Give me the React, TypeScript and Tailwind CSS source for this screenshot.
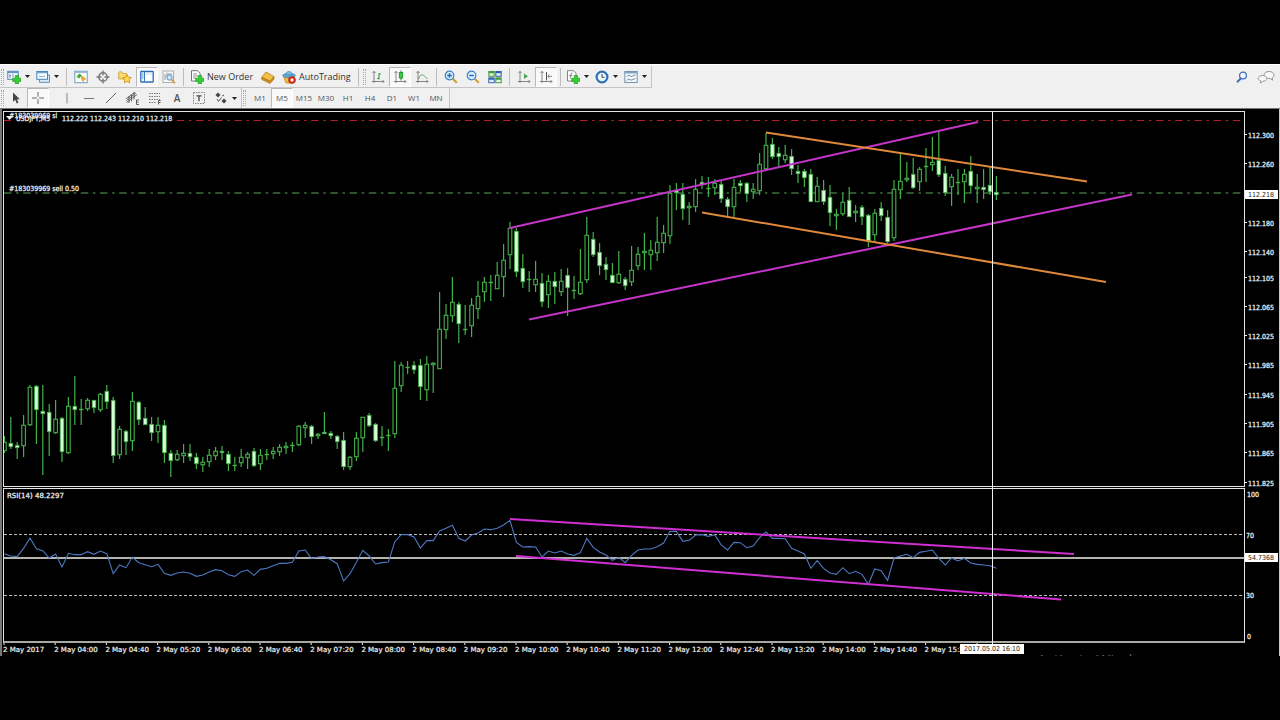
import type { ReactNode } from "react";

// [high, body top, body bottom, low, filled]
type Candle = [number, number, number, number, 0 | 1];

const candles: Candle[] = [
    [436, 442, 451, 453, 0], [417, 443, 447, 449, 1], [442, 445, 448, 459, 1], [415, 425, 446, 457, 0],
    [385, 387, 425, 426, 0], [385, 386, 410, 444, 1], [385, 411, 414, 475, 1], [404, 412, 432, 456, 1],
    [400, 419, 433, 434, 0], [417, 418, 452, 462, 1], [397, 406, 453, 454, 0], [376, 406, 410, 425, 1],
    [399, 409, 410, 425, 0], [398, 400, 409, 411, 0], [400, 400, 408, 413, 1], [393, 394, 410, 412, 0],
    [385, 391, 402, 409, 1], [397, 400, 456, 463, 1], [426, 429, 455, 459, 0], [430, 431, 442, 455, 1],
    [392, 401, 441, 451, 0], [401, 402, 420, 425, 1], [407, 418, 425, 425, 1], [417, 424, 433, 441, 1],
    [417, 425, 432, 443, 0], [420, 425, 453, 463, 1], [450, 453, 461, 477, 1], [450, 454, 460, 461, 0],
    [444, 453, 456, 463, 0], [444, 453, 457, 461, 1], [453, 457, 464, 469, 1], [457, 462, 465, 472, 0],
    [449, 455, 462, 467, 0], [447, 451, 456, 460, 0], [446, 451, 453, 460, 1], [451, 454, 464, 471, 1],
    [457, 465, 466, 471, 0], [449, 457, 463, 467, 0], [452, 454, 458, 469, 0], [448, 451, 466, 467, 1],
    [449, 455, 464, 470, 0], [449, 454, 455, 460, 0], [447, 451, 454, 459, 0], [444, 447, 452, 456, 0],
    [442, 446, 448, 454, 0], [442, 445, 446, 452, 0], [425, 426, 445, 446, 0], [422, 425, 428, 438, 0],
    [425, 426, 437, 444, 1], [433, 434, 436, 439, 0], [412, 432, 434, 434, 1], [431, 433, 436, 439, 1],
    [435, 436, 442, 449, 1], [432, 440, 467, 470, 1], [456, 457, 467, 470, 0], [432, 438, 457, 461, 0],
    [417, 417, 438, 452, 0], [413, 415, 426, 427, 1], [423, 424, 441, 442, 1], [426, 437, 438, 446, 1],
    [429, 435, 436, 451, 0], [361, 388, 434, 438, 0], [362, 365, 386, 392, 0], [361, 367, 368, 374, 0],
    [361, 365, 370, 374, 1], [359, 365, 387, 400, 1], [356, 364, 390, 401, 0], [362, 363, 365, 393, 0],
    [292, 329, 369, 369, 0], [304, 315, 330, 339, 0], [277, 302, 316, 322, 0], [302, 304, 324, 343, 1],
    [305, 329, 330, 335, 0], [298, 305, 326, 337, 0], [281, 296, 309, 319, 0], [277, 282, 292, 302, 0],
    [275, 282, 283, 301, 0], [262, 275, 289, 289, 0], [244, 260, 277, 297, 0], [222, 228, 255, 269, 0],
    [228, 231, 272, 277, 1], [254, 268, 282, 288, 1], [271, 279, 280, 292, 0], [261, 279, 285, 292, 0],
    [273, 283, 302, 307, 1], [275, 281, 295, 308, 0], [272, 281, 287, 304, 1], [269, 281, 292, 296, 0],
    [268, 275, 288, 316, 1], [276, 290, 291, 299, 0], [249, 282, 294, 295, 0], [217, 235, 280, 283, 0],
    [232, 239, 255, 257, 1], [243, 252, 266, 275, 1], [257, 264, 270, 280, 1], [263, 275, 283, 283, 1],
    [251, 274, 283, 284, 0], [277, 279, 286, 290, 1], [246, 270, 282, 286, 0], [247, 254, 266, 270, 0],
    [233, 251, 253, 270, 0], [240, 250, 255, 270, 0], [217, 242, 253, 261, 0], [225, 233, 243, 253, 0],
    [185, 193, 236, 244, 0], [183, 190, 193, 210, 1], [183, 194, 209, 220, 1], [202, 206, 208, 225, 0],
    [179, 189, 207, 212, 0], [176, 182, 185, 189, 1], [177, 188, 189, 197, 0], [179, 183, 188, 195, 0],
    [180, 184, 199, 203, 1], [197, 199, 207, 216, 1], [179, 187, 207, 217, 0], [180, 183, 186, 192, 1],
    [182, 183, 194, 202, 1], [183, 189, 192, 199, 0], [153, 164, 191, 195, 0], [133, 145, 169, 170, 0],
    [138, 144, 157, 159, 1], [147, 153, 157, 168, 1], [145, 155, 160, 163, 0], [149, 156, 169, 175, 1],
    [165, 171, 174, 183, 1], [169, 171, 178, 187, 1], [169, 174, 202, 202, 1], [177, 186, 202, 202, 0],
    [180, 190, 202, 205, 1], [185, 197, 213, 226, 1], [209, 214, 216, 230, 0], [193, 202, 214, 216, 0],
    [187, 200, 217, 217, 1], [205, 211, 213, 222, 0], [205, 207, 217, 225, 1], [214, 215, 241, 247, 1],
    [209, 213, 235, 241, 0], [202, 208, 216, 221, 1], [210, 217, 242, 243, 1], [180, 189, 238, 241, 0],
    [153, 181, 190, 199, 0], [162, 178, 180, 182, 0], [158, 174, 188, 189, 1], [167, 169, 182, 191, 0],
    [148, 166, 167, 182, 0], [137, 162, 165, 171, 0], [132, 160, 175, 177, 1], [166, 173, 193, 196, 1],
    [174, 177, 187, 206, 0], [169, 182, 183, 195, 0], [169, 174, 182, 203, 0], [156, 171, 186, 193, 1],
    [174, 187, 189, 203, 0], [169, 187, 190, 199, 1], [166, 185, 192, 195, 1], [176, 192, 195, 200, 1],
];

// thirds of a pixel below y = 485
const rsi = [
    206, 213, 215, 190, 159, 191, 197, 219, 207, 246, 205, 209, 209, 200, 208, 198, 206, 266, 240, 248,
    216, 233, 239, 245, 238, 265, 271, 264, 261, 265, 274, 270, 261, 254, 257, 269, 274, 260, 255, 271,
    253, 250, 242, 235, 235, 232, 198, 195, 221, 216, 215, 224, 236, 288, 266, 232, 196, 213, 237, 233,
    231, 170, 149, 149, 156, 189, 167, 167, 138, 130, 121, 160, 168, 150, 144, 132, 134, 130, 120, 106,
    172, 186, 185, 186, 216, 198, 204, 198, 207, 211, 203, 160, 187, 201, 210, 226, 217, 233, 211, 195,
    192, 192, 185, 174, 139, 139, 169, 166, 150, 149, 154, 149, 180, 195, 172, 173, 188, 183, 158, 141,
    160, 160, 161, 190, 198, 207, 250, 227, 250, 264, 268, 248, 266, 259, 268, 298, 252, 257, 286, 219,
    213, 208, 218, 202, 199, 195, 220, 240, 219, 228, 220, 234, 238, 240, 242, 250,
];

const STEP = 6.4;
const barX = (i: number) => 4.4 + i * STEP;

const prices = [
    { label: "112.300", y: 135 },
    { label: "112.260", y: 164 },
    { label: "112.180", y: 223 },
    { label: "112.140", y: 252 },
    { label: "112.105", y: 278 },
    { label: "112.065", y: 307 },
    { label: "112.025", y: 336 },
    { label: "111.985", y: 365 },
    { label: "111.945", y: 395 },
    { label: "111.905", y: 424 },
    { label: "111.865", y: 453 },
    { label: "111.825", y: 483 },
];

const times = [
    "2017", "04:00", "04:40", "05:20", "06:00", "06:40", "07:20", "08:00", "08:40", "09:20",
    "10:00", "10:40", "11:20", "12:00", "12:40", "13:20", "14:00", "14:40", "15:20",
];

const timeframes = ["M1", "M5", "M15", "M30", "H1", "H4", "D1", "W1", "MN"];

/* ---------- icons ---------- */

function Icon({ children }: { children: ReactNode }) {
    return (
        <svg viewBox="0 0 14 14" className="w-[14px] h-[14px] shrink-0" fill="none" aria-hidden="true">
            {children}
        </svg>
    );
}

const Plus = () => (
    <path d="M8.300 5.500h3.200v2.700h2.500v3.200h-2.500V14H8.300v-2.600H5.700V8.200h2.600z" fill="#35cf35" stroke="#15901c" strokeWidth=".6" />
);

const NewChartIcon = () => (
    <Icon>
        <rect x=".8" y="1.300" width="10.400" height="8" fill="#fff" stroke="#4a83b8" />
        <path d="M1 2.300h10" stroke="#5d97cc" strokeWidth="1.800" />
        <path d="M3 8V4.500M2 5.500h2M6 7.500V4" stroke="#6d93b8" />
        <Plus />
    </Icon>
);

const ProfilesIcon = () => (
    <Icon>
        <path d="M3.500 9.500V12.300h10V5h-2" fill="#dcebf8" stroke="#5a8fc0" />
        <rect x=".8" y="1.500" width="10.700" height="7.800" fill="#f4faff" stroke="#4a83b8" />
        <path d="M1 2.500h10.300" stroke="#6fa5d4" strokeWidth="1.500" />
        <path d="M3 6.500h6" stroke="#8db4d8" />
    </Icon>
);

const MarketWatchIcon = () => (
    <Icon>
        <rect x=".8" y="1.300" width="12.400" height="11.400" fill="#fffdf0" stroke="#6d9cc7" />
        <path d="M1 2.200h12" stroke="#8db9de" strokeWidth="1.400" />
        <path d="M5.500 3.800 8 6.300 6.500 6.500 5 8.300 3 6.500z" fill="#3bb13b" stroke="#26902a" strokeWidth=".5" />
        <path d="m7 8 2-1.500 2.700 2.500-1 .2L9 11.500z" fill="#f0a83c" stroke="#bc7718" strokeWidth=".5" />
    </Icon>
);

const DataWindowIcon = () => (
    <Icon>
        <circle cx="7" cy="7" r="4.200" stroke="#777" strokeWidth="1.400" />
        <path d="M7 .5v5M7 8.500v5M.5 7h5M8.500 7h5" stroke="#777" strokeWidth="1.300" />
    </Icon>
);

const NavigatorIcon = () => (
    <Icon>
        <path d="M.7 2.500V9h8V3.500H4.500L3.800 1.800H1.300z" fill="#f8dc7a" stroke="#c99a2a" strokeWidth=".8" />
        <path
            d="m9 4.600 1.400 2.700 3 .4-2.200 2.100.5 3L9 11.400l-2.700 1.400.5-3-2.200-2.100 3-.4z"
            fill="#ffd94a"
            stroke="#c78f16"
            strokeWidth=".8"
        />
    </Icon>
);

const TerminalIcon = () => (
    <Icon>
        <rect x=".8" y="1.500" width="12.400" height="10.500" rx=".5" fill="#fff" stroke="#2b6cb4" strokeWidth="1.300" />
        <path d="M4.500 2v9.500" stroke="#2b6cb4" strokeWidth=".9" />
        <path d="M2 4h1.500M2 6h1.500M2 8h1.500" stroke="#3c7cc2" />
        <path d="M5.500 4h6.500" stroke="#c3dbf1" />
    </Icon>
);

const TesterIcon = () => (
    <Icon>
        <rect x="1" y="1" width="10.500" height="11.500" fill="#fafafa" stroke="#9a9a9a" strokeWidth=".8" />
        <path d="M3 10V4M5 7V2.500M7 6V3M9 8V3" stroke="#8b8b8b" strokeWidth=".9" />
        <circle cx="7.500" cy="7.500" r="2.700" fill="#cfe6fa" stroke="#4f92cc" />
        <path d="m9.600 9.600 3.400 3.600" stroke="#d39a43" strokeWidth="1.700" />
    </Icon>
);

const NewOrderIcon = () => (
    <Icon>
        <path d="M1.500.7h6l2.500 2.500V11h-8.500z" fill="#fff" stroke="#666" strokeWidth=".9" />
        <path d="M3 4h4M3 6h5M3 8h3" stroke="#777" strokeWidth=".8" />
        <Plus />
    </Icon>
);

const BookIcon = () => (
    <Icon>
        <path d="M.8 7.500 5 2l8 4.700-3.500 4.500z" fill="#f3c044" stroke="#b27b14" strokeWidth=".8" />
        <path d="M.8 7.500v2L9 13.500l4-4.500V6.700l-3.700 4.800z" fill="#d99722" stroke="#a56e10" strokeWidth=".7" />
    </Icon>
);

const AutoTradingIcon = () => (
    <Icon>
        <path d="M1.500 6.500h11L9.500 13H4z" fill="#f2b93b" stroke="#b9831e" strokeWidth=".7" />
        <ellipse cx="7" cy="5.500" rx="6.300" ry="2.200" fill="#66abd9" stroke="#3a7fae" strokeWidth=".7" />
        <path d="M3.500 5C3.800.5 9.500.3 10.500 4.800z" fill="#7fc0e8" stroke="#3a7fae" strokeWidth=".7" />
        <circle cx="10" cy="10" r="3.500" fill="#d9301f" stroke="#a81c10" strokeWidth=".6" />
        <rect x="8.600" y="8.600" width="2.800" height="2.800" fill="#fff" />
    </Icon>
);

const Axes = () => (
    <path d="M3 1.500v11.500M.8 11.500h12M1.500 3 3 1.300 4.500 3M11.500 10l1.500 1.500-1.500 1.500" stroke="#777" strokeWidth=".9" />
);

const BarChartIcon = () => (
    <Icon>
        <Axes />
        <path d="M8 3v6.500M8 4h2M6 8.500h2" stroke="#3f9a46" strokeWidth="1.100" />
    </Icon>
);

const CandleChartIcon = () => (
    <Icon>
        <Axes />
        <path d="M8 .5v10" stroke="#198a22" />
        <rect x="6.300" y="2.500" width="3.400" height="5.500" fill="#3ecb46" stroke="#198a22" strokeWidth=".8" />
    </Icon>
);

const LineChartIcon = () => (
    <Icon>
        <Axes />
        <path d="M3.500 9C5 5 7 4 8.500 5.300S11 8 12.500 8.500" stroke="#58a05c" />
    </Icon>
);

function ZoomIcon({ plus }: { plus?: boolean }) {
    return (
        <Icon>
            <path d="m8.500 8.500 4.300 4.300" stroke="#d2a030" strokeWidth="2.200" />
            <circle cx="5.500" cy="5.500" r="4.300" fill="#d8ecfc" stroke="#3b83cc" strokeWidth="1.200" />
            <path d={plus ? "M3.200 5.500h4.600M5.500 3.200v4.600" : "M3.200 5.500h4.600"} stroke="#2769b4" strokeWidth="1.400" />
        </Icon>
    );
}

const TileIcon = () => (
    <Icon>
        <rect x=".3" y="1" width="6.400" height="5.800" fill="#3e9b39" />
        <rect x="7.300" y="1" width="6.400" height="5.800" fill="#2d62b3" />
        <rect x=".3" y="7.400" width="6.400" height="5.800" fill="#2d62b3" />
        <rect x="7.300" y="7.400" width="6.400" height="5.800" fill="#3e9b39" />
        <path d="M1.300 4.500h4.400M8.300 4.500h4.400M1.300 11h4.400M8.300 11h4.400" stroke="#e6f2e8" strokeWidth="2.400" />
    </Icon>
);

const AutoScrollIcon = () => (
    <Icon>
        <Axes />
        <path d="M7 3.500v5.500L11 6.300z" fill="#4aa84f" />
    </Icon>
);

const ChartShiftIcon = () => (
    <Icon>
        <Axes />
        <path d="M7.500 2v8.500" stroke="#555" />
        <path d="M13 6.300H9M10.500 4.500 8.700 6.300l1.800 1.800" stroke="#777" strokeWidth=".9" />
    </Icon>
);

const IndicatorsIcon = () => (
    <Icon>
        <path d="M1.500.7h6l2.500 2.500V11h-8.500z" fill="#fff" stroke="#777" strokeWidth=".9" />
        <path d="M6.500 3C4.500 2.700 5 5 4.500 8.500M3.300 5.500h3" stroke="#666" strokeWidth=".8" />
        <Plus />
    </Icon>
);

const PeriodsIcon = () => (
    <Icon>
        <circle cx="7" cy="7" r="5.400" fill="#eef6fd" stroke="#2d70b8" strokeWidth="2.200" />
        <path d="M7 4v3.300h2.500" stroke="#444" />
    </Icon>
);

const TemplatesIcon = () => (
    <Icon>
        <rect x=".8" y="1.500" width="12.400" height="11" fill="#f3f8fc" stroke="#7692ac" />
        <path d="M1 2.700h12" stroke="#7fa6c9" strokeWidth="1.600" />
        <path d="M2.500 7 5 5l2 1.500L11.500 5M2.500 10.500 5 9l2 1.200 4.500-1.700" stroke="#6b8299" strokeWidth=".9" />
    </Icon>
);

const SearchIcon = () => (
    <Icon>
        <path d="M6 8.200 2 12.200" stroke="#3f6bbb" strokeWidth="2" />
        <circle cx="8" cy="5.500" r="3.400" fill="#f4f8fd" stroke="#3f6bbb" strokeWidth="1.300" />
    </Icon>
);

const ChatIcon = () => (
    <svg viewBox="0 0 18 14" className="w-[18px] h-[14px]" fill="#f7f7f7" stroke="#8d8d8d" strokeWidth=".9" aria-hidden="true">
        <path d="M12 1.500c3 0 5 1.500 5 3.500 0 1.300-.8 2.200-2 2.900l.7 2.300-2.700-1.700c-3.300.2-6-1.200-6-3.500 0-2 2-3.500 5-3.500z" />
        <path d="M5.500 5.500c2.500 0 4.300 1.200 4.300 2.900s-1.800 2.900-4 2.900L3.500 13l.3-2.200C2.200 10.300 1.200 9.500 1.200 8.400c0-1.700 1.800-2.900 4.300-2.900z" />
    </svg>
);

const CursorIcon = () => (
    <Icon>
        <path d="M4 1.500v9.300l2.200-2 1.600 3.700 1.700-.8-1.600-3.500h3z" fill="#444" />
    </Icon>
);

const CrosshairIcon = () => (
    <Icon>
        <path d="M7 1v4.800M7 8.200V13M1 7h4.800M8.200 7H13" stroke="#666" />
    </Icon>
);

const VLineIcon = () => (
    <Icon>
        <path d="M7 2v10.500" stroke="#888" />
    </Icon>
);

const HLineIcon = () => (
    <Icon>
        <path d="M2 7.500h10" stroke="#777" />
    </Icon>
);

const TrendIcon = () => (
    <Icon>
        <path d="M2 12 12 2" stroke="#666" />
    </Icon>
);

const ChannelIcon = () => (
    <Icon>
        <path d="M0 8 9 1M.5 11.500 11 3.500M3 5v7M5.500 3.500v7M8 1.500v7M.5 9.500 10 2" stroke="#555" strokeWidth=".9" />
        <path d="M13 9h-2.500v4.500H13M10.500 11.200h2" stroke="#444" strokeWidth=".8" />
    </Icon>
);

const FiboIcon = () => (
    <Icon>
        <path d="M1 2.500h11M1 5.500h11M1 8.500h11M1 11.500h7" stroke="#777" strokeDasharray="1.500 1" />
        <path d="M12.800 9.500h-2.300v4M10.500 11.500h2" stroke="#444" strokeWidth=".8" />
    </Icon>
);

const LabelFrameIcon = () => (
    <Icon>
        <rect x="1.500" y="1.500" width="11" height="11" stroke="#777" strokeDasharray="1.500 1" strokeWidth=".9" />
        <path d="M4.500 4.800h5M7 4.800v5.500" stroke="#444" strokeWidth="1.300" />
    </Icon>
);

const ArrowsIcon = () => (
    <Icon>
        <path d="M4 1.500 6.500 4 4 6.500 1.500 4z" fill="#444" />
        <path d="M10 7.500 12.500 10 10 12.500 7.500 10z" fill="#444" />
        <path d="m3 8 1.500 2.500L7.500 6.500M8 5l2-1" stroke="#555" />
    </Icon>
);

/* ---------- toolbar parts ---------- */

const Grip = () => <span className="w-[3px] h-4 mx-px shrink-0 border-x border-dotted border-[#a8a8a8]" />;
const Separator = () => <span className="w-px h-[18px] mx-[3px] shrink-0 bg-[#bdbdbd]" />;

interface ToolProps {
    label: string;
    pressed?: boolean;
    children: ReactNode;
}

function Tool({ label, pressed, children }: ToolProps) {
    return (
        <button
            type="button"
            aria-label={label}
            aria-pressed={pressed}
            className={
                pressed
                    ? "w-[22px] h-5 shrink-0 flex items-center justify-center bg-[#f9f9f9] border border-[#b8b8b8] border-r-white border-b-white"
                    : "w-[22px] h-5 shrink-0 flex items-center justify-center hover:bg-white"
            }
        >
            {children}
        </button>
    );
}

function MenuTool({ label, children }: ToolProps) {
    return (
        <button type="button" aria-label={label} className="w-[29px] h-5 shrink-0 flex items-center gap-1 pl-[2px] hover:bg-white">
            {children}
            <svg viewBox="0 0 5 3" className="w-[5px] h-[3px]" aria-hidden="true">
                <path d="M0 0h5L2.500 3z" fill="#222" />
            </svg>
        </button>
    );
}

function TextTool({ label, children }: ToolProps) {
    return (
        <button type="button" className="h-5 shrink-0 flex items-center gap-[3px] pl-[3px] pr-1 text-[9px] leading-none text-[#333] hover:bg-white">
            {children}
            <span>{label}</span>
        </button>
    );
}

function Toolbars() {
    return (
        <header className="pt-px bg-[#f0f0f0] border-t border-white border-b border-b-[#777] font-['Open_Sans',sans-serif]">
            <div className="flex items-center h-[22px]">
                <div className="flex items-center h-full border-r border-b border-[#c4c4c4]">
                    <Grip />
                    <MenuTool label="New chart"><NewChartIcon /></MenuTool>
                    <MenuTool label="Profiles"><ProfilesIcon /></MenuTool>
                    <Separator />
                    <Tool label="Market Watch"><MarketWatchIcon /></Tool>
                    <Tool label="Data Window"><DataWindowIcon /></Tool>
                    <Tool label="Navigator"><NavigatorIcon /></Tool>
                    <Tool label="Terminal" pressed><TerminalIcon /></Tool>
                    <Tool label="Strategy Tester"><TesterIcon /></Tool>
                    <Separator />
                    <TextTool label="New Order"><NewOrderIcon /></TextTool>
                    <Tool label="MetaEditor"><BookIcon /></Tool>
                    <TextTool label="AutoTrading"><AutoTradingIcon /></TextTool>
                    <Separator />
                    <Grip />
                    <Tool label="Bar Chart"><BarChartIcon /></Tool>
                    <Tool label="Candlesticks" pressed><CandleChartIcon /></Tool>
                    <Tool label="Line Chart"><LineChartIcon /></Tool>
                    <Separator />
                    <Tool label="Zoom In"><ZoomIcon plus /></Tool>
                    <Tool label="Zoom Out"><ZoomIcon /></Tool>
                    <Tool label="Tile Windows"><TileIcon /></Tool>
                    <Separator />
                    <Tool label="Auto Scroll"><AutoScrollIcon /></Tool>
                    <Tool label="Chart Shift" pressed><ChartShiftIcon /></Tool>
                    <Separator />
                    <MenuTool label="Indicators"><IndicatorsIcon /></MenuTool>
                    <MenuTool label="Periods"><PeriodsIcon /></MenuTool>
                    <MenuTool label="Templates"><TemplatesIcon /></MenuTool>
                </div>
                <div className="ml-auto flex items-center gap-[2px] pr-[3px]">
                    <Tool label="Search"><SearchIcon /></Tool>
                    <Tool label="Chat"><ChatIcon /></Tool>
                </div>
            </div>

            <div className="flex items-center h-5">
                <div className="flex items-center h-full border-r border-[#c4c4c4]">
                    <Grip />
                    <Tool label="Cursor"><CursorIcon /></Tool>
                    <Tool label="Crosshair" pressed><CrosshairIcon /></Tool>
                    <div className="flex pl-[7px] pr-[2px]">
                        <Tool label="Vertical Line"><VLineIcon /></Tool>
                        <Tool label="Horizontal Line"><HLineIcon /></Tool>
                        <Tool label="Trendline"><TrendIcon /></Tool>
                        <Tool label="Equidistant Channel"><ChannelIcon /></Tool>
                        <Tool label="Fibonacci Retracement"><FiboIcon /></Tool>
                        <Tool label="Text"><span className="text-[10px] leading-none font-semibold text-[#555]">A</span></Tool>
                        <Tool label="Text Label"><LabelFrameIcon /></Tool>
                    </div>
                    <MenuTool label="Arrows"><ArrowsIcon /></MenuTool>
                    <div className="flex items-center h-full border-l border-[#c4c4c4]">
                        <Grip />
                        <div className="flex px-[2px]">
                            {timeframes.map((tf) => (
                                <Tool key={tf} label={tf} pressed={tf === "M5"}>
                                    <span className="text-[8px] leading-none text-[#555]">{tf}</span>
                                </Tool>
                            ))}
                        </div>
                    </div>
                </div>
            </div>
        </header>
    );
}

/* ---------- chart ---------- */

function Candles() {
    return (
        <g stroke="#44b04a">
            {candles.map(([high, top, bottom, low, filled], i) => {
                const x = barX(i);
                return (
                    <g key={i}>
                        <path d={`M${x} ${high}V${top}M${x} ${bottom}V${low}`} strokeWidth="1.2" />
                        {bottom - top < 2 ? (
                            <path d={`M${x - 2.2} ${top + 0.5}h4.400`} strokeWidth="1.4" />
                        ) : (
                            <rect
                                x={x - 1.8}
                                y={top + 0.3}
                                width="3.6"
                                height={bottom - top - 0.6}
                                fill={filled ? "#d4ffd4" : "#000"}
                                strokeWidth={filled ? 0.8 : 1.1}
                            />
                        )}
                    </g>
                );
            })}
        </g>
    );
}

function PricePanel() {
    return (
        <div className="flex">
            <div className="flex-1 min-w-0 border border-[#e4e4e4]">
                <svg className="block w-full h-[374px] text-[7px]" fill="#f0f0f0" role="img" aria-label="USDJPY M5 price chart">
                    <g transform="translate(-4 -112)">
                        <path d="M4 120.500h7" stroke="#b01f2e" />
                        <line x1="176" x2="101%" y1="120.500" y2="120.500" stroke="#b01f2e" strokeDasharray="7.500 4.600 2.500 4.600" strokeDashoffset="18.400" />
                        <line x1="4" x2="101%" y1="193" y2="193" stroke="#5aa65e" strokeDasharray="7.500 4.600 2.500 4.600" />
                        <Candles />
                        <g stroke="#c435c8" strokeWidth="2">
                            <path d="M510 228 978 122" />
                            <path d="M529 319.500 1132 194.500" />
                        </g>
                        <g stroke="#e0893a" strokeWidth="2">
                            <path d="M766 132.500 1087 181.500" />
                            <path d="M702 212.500 1106 282" />
                        </g>
                        <path d="M6 116h7l-3.500 4z" />
                        <g stroke="#f0f0f0" strokeWidth=".25">
                            <text x="9" y="118">#183039969 sl</text>
                            <text x="16" y="121">USDJPY,M5</text>
                            <text x="62" y="121">112.222 112.243 112.210 112.218</text>
                            <text x="9" y="191">#183039969 sell 0.50</text>
                        </g>
                    </g>
                </svg>
            </div>
            <svg className="w-[34px] h-[376px] text-[7px]" fill="#f0f0f0" role="img" aria-label="Price scale">
                <g transform="translate(0 -111)">
                    {prices.map(({ label, y }) => (
                        <g key={label} stroke="#f0f0f0">
                            <path d={`M0 ${y - 0.5}h2`} />
                            <text x="3" y={y + 3} strokeWidth=".25">{label}</text>
                        </g>
                    ))}
                    <rect x="0" y="190" width="33" height="9" fill="#fff" />
                    <text x="3" y="197" fill="#222">112.218</text>
                </g>
            </svg>
        </div>
    );
}

function RsiPanel() {
    const points = rsi.map((v, i) => `${barX(i)},${485 + v / 3}`).join(" ");
    return (
        <div className="flex mt-px">
            <div className="flex-1 min-w-0 border border-b-2 border-[#e4e4e4] border-b-[#a9a9a4]">
                <svg className="block w-full h-[152px] text-[7px]" fill="#f0f0f0" role="img" aria-label="RSI indicator">
                    <g transform="translate(-4 -489)">
                        <line x1="4" x2="101%" y1="534.500" y2="534.500" stroke="#bdbdbd" strokeDasharray="3 2" />
                        <line x1="4" x2="101%" y1="595.500" y2="595.500" stroke="#bdbdbd" strokeDasharray="3 2" />
                        <line x1="4" x2="101%" y1="558" y2="558" stroke="#b4b4ae" strokeWidth="2" />
                        <polyline points={points} fill="none" stroke="#4d78c2" strokeWidth="1.100" />
                        <g stroke="#cf2fd0" strokeWidth="2">
                            <path d="M510 519 1074 554" />
                            <path d="M516 556 1061 599.500" />
                        </g>
                        <text x="7" y="498" stroke="#f0f0f0" strokeWidth=".25" className="font-['DejaVu_Sans',sans-serif]">
                            RSI(14) 48.2297
                        </text>
                    </g>
                </svg>
            </div>
            <svg className="w-[34px] h-[155px] text-[7px]" fill="#f0f0f0" role="img" aria-label="RSI scale">
                <g transform="translate(0 -488)">
                    <g stroke="#f0f0f0" strokeWidth=".25">
                        <text x="2" y="497">100</text>
                        <text x="1" y="538">70</text>
                        <text x="1" y="598">30</text>
                        <text x="2" y="639">0</text>
                    </g>
                    <rect x="0" y="553" width="33" height="9" fill="#fff" />
                    <text x="3" y="560" fill="#222">54.7368</text>
                </g>
            </svg>
        </div>
    );
}

function TimeAxis() {
    return (
        <div className="relative h-[13px] overflow-hidden">
            <svg className="block w-full h-[13px] text-[7px] font-['DejaVu_Sans',sans-serif]" fill="#f0f0f0" stroke="#f0f0f0" role="img" aria-label="Time scale">
                {times.map((time, k) => (
                    <g key={time}>
                        <path d={`M${1 + k * 8 * STEP} 0v2`} />
                        <text x={k * 8 * STEP} y="9" strokeWidth=".2">2 May {time}</text>
                    </g>
                ))}
                <path d="M974 0v2" />
            </svg>
            <span className="absolute left-[957px] top-px h-[10px] w-16 bg-white text-[#222] text-[7px] leading-[10px] text-center">
                2017.05.02 16:10
            </span>
            <span className="absolute left-[1034px] top-[6px] text-[15px] leading-[20px] text-[#666] font-['Open_Sans',sans-serif] whitespace-nowrap">
                Activate Wind
            </span>
        </div>
    );
}

export default function App() {
    return (
        <div className="min-h-screen bg-black pt-16">
            <Toolbars />
            <main className="flex font-['DejaVu_Sans_Condensed','DejaVu_Sans',sans-serif]">
                <div className="w-[2px] mr-px bg-[#777]" />
                <div className="relative flex-1 min-w-0 pt-[2px]">
                    <PricePanel />
                    <RsiPanel />
                    <TimeAxis />
                    {/* crosshair */}
                    <span className="absolute left-[989px] top-[2px] bottom-[12px] w-px bg-[#f0f0f0]" />
                </div>
                <div className="w-px bg-[#c8c8c8]" />
            </main>
        </div>
    );
}
